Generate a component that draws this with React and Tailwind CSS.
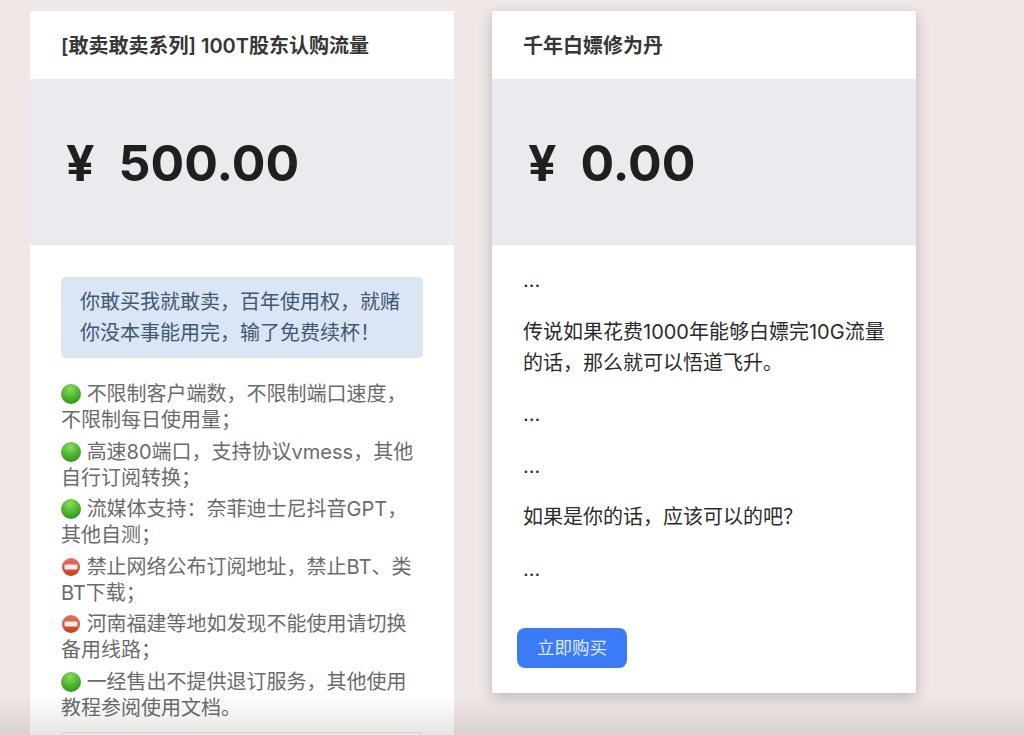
const CARD_FONT = "font-['Inter','Noto_Sans_CJK_SC',sans-serif]";

function GreenDot() {
  return (
    <svg viewBox="0 0 20 20" className="inline-block w-5 h-5 align-[-3px]">
      <defs>
        <radialGradient id="green" cx="45%" cy="25%" r="80%">
          <stop offset="0%" stopColor="#86e05c" />
          <stop offset="55%" stopColor="#4fb52e" />
          <stop offset="100%" stopColor="#2f8f1c" />
        </radialGradient>
      </defs>
      <circle cx="10" cy="10" r="10" fill="url(#green)" />
    </svg>
  );
}

function NoEntry() {
  return (
    <svg viewBox="0 0 20 20" className="inline-block w-5 h-5 align-[-3px]">
      <defs>
        <linearGradient id="red" x1="0" y1="0" x2="0" y2="1">
          <stop offset="0%" stopColor="#e8705c" />
          <stop offset="100%" stopColor="#c9401f" />
        </linearGradient>
      </defs>
      <circle cx="10" cy="10" r="9" fill="url(#red)" />
      <rect x="3.5" y="7.5" width="13" height="5" rx="1" fill="#f4efec" />
    </svg>
  );
}

const features = [
  { ok: true, text: "不限制客户端数\uFF0C不限制端口速度\uFF0C不限制每日使用量\uFF1B" },
  { ok: true, text: "高速80端口\uFF0C支持协议vmess\uFF0C其他自行订阅转换\uFF1B" },
  { ok: true, text: "流媒体支持\uFF1A奈菲迪士尼抖音GPT\uFF0C其他自测\uFF1B" },
  { ok: false, text: "禁止网络公布订阅地址\uFF0C禁止BT、类BT下载\uFF1B" },
  { ok: false, text: "河南福建等地如发现不能使用请切换备用线路\uFF1B" },
  { ok: true, text: "一经售出不提供退订服务\uFF0C其他使用教程参阅使用文档。" },
];

function PriceHead({ title, price }) {
  return (
    <>
      <div className="h-[68px] flex items-center px-[31px] pt-[2px] text-[20px] font-semibold text-[#363636]">{title}</div>
      <div className="h-[166px] flex items-center px-[36px] pt-[2px] bg-[#e9ebef] text-[50px] font-bold text-[#1f1f1f] leading-none">
        <span>¥</span>
        <span className="ml-[24px]">{price}</span>
      </div>
    </>
  );
}

export default function App() {
  return (
    <div className={`relative h-[735px] overflow-hidden bg-[#f0e8e6] flex items-start gap-[38px] pl-[30px] pt-[11px] ${CARD_FONT}`}>
      <div className="w-[424px] shrink-0 bg-white">
        <PriceHead title="[敢卖敢卖系列] 100T股东认购流量" price="500.00" />
        <div className="px-[31px] pt-[32px] pb-[40px]">
          <div className="rounded-[5px] bg-[#dae6f3] px-[19px] py-[10px] text-[20px] leading-[30.5px] text-[#3f5873]">
            {"你敢买我就敢卖\uFF0C百年使用权\uFF0C就赌你没本事能用完\uFF0C输了免费续杯\uFF01"}
          </div>
          <div className="mt-[23px] flex flex-col gap-[5.5px]">
            {features.map((f) => (
              <p key={f.text} className="text-[20px] leading-[26px] text-[#6b6b6b]">
                {f.ok ? <GreenDot /> : <NoEntry />} {f.text}
              </p>
            ))}
          </div>
          <div className="mt-[11px] h-[20px] rounded-t-[5px] border-t border-[#ecebd8]" />
        </div>
      </div>

      <div className="w-[424px] shrink-0 bg-white rounded-b-[2px] shadow-[0_4px_14px_rgba(0,0,0,0.22)]">
        <PriceHead title="千年白嫖修为丹" price="0.00" />
        <div className="px-[31px] pt-[20px] text-[20px] leading-[31px] text-[#2b2b2b]">
          <p>...</p>
          <p className="mt-[20.6px]">{"传说如果花费1000年能够白嫖完10G流量的话\uFF0C那么就可以悟道飞升。"}</p>
          <p className="mt-[20.6px]">...</p>
          <p className="mt-[20.6px]">...</p>
          <p className="mt-[20.6px]">{"如果是你的话\uFF0C应该可以的吧\uFF1F"}</p>
          <p className="mt-[20.6px]">...</p>
        </div>
        <button className="ml-[25px] mt-[43px] mb-[25px] block w-[110px] h-[40px] rounded-[8px] bg-[#3c7bf8] text-[17.5px] text-[#dfeafd]">
          立即购买
        </button>
      </div>

      {/* soft fade along the bottom edge of the page */}
      <div className="absolute inset-x-0 bottom-0 h-[40px] bg-gradient-to-b from-transparent to-[#0000001a]" />
    </div>
  );
}
